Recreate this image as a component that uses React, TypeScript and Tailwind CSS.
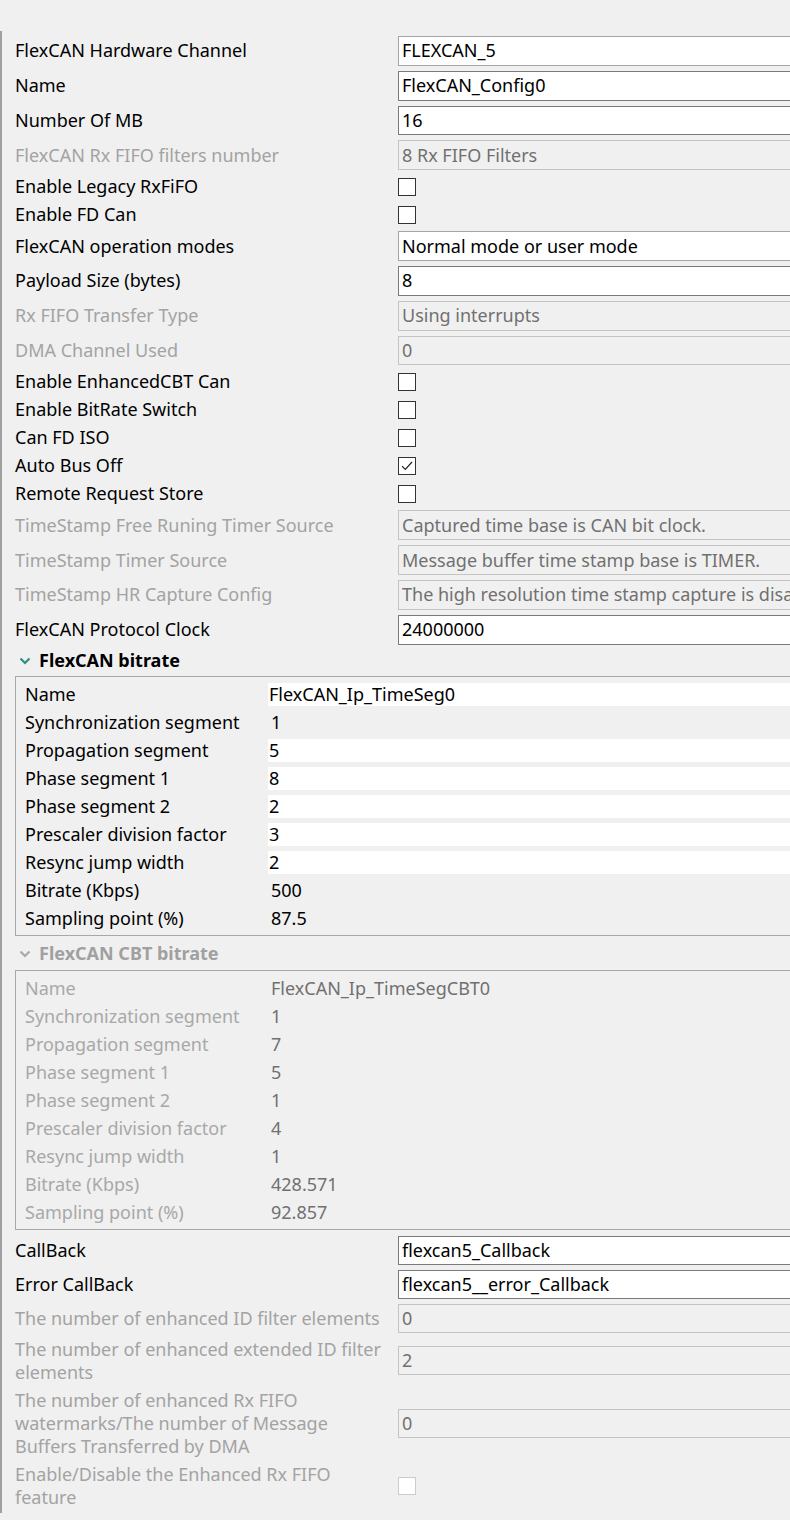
import type { ReactNode } from "react";

type Field =
  | { kind: "text"; label: string; value: string; disabled?: boolean; combo?: boolean }
  | { kind: "check"; label: string; checked?: boolean; disabled?: boolean };

type BitrateRow = { label: string; value: string; editable?: boolean };

const generalFields: Field[] = [
  { kind: "text", label: "FlexCAN Hardware Channel", value: "FLEXCAN_5", combo: true },
  { kind: "text", label: "Name", value: "FlexCAN_Config0" },
  { kind: "text", label: "Number Of MB", value: "16" },
  { kind: "text", label: "FlexCAN Rx FIFO filters number", value: "8 Rx FIFO Filters", disabled: true },
  { kind: "check", label: "Enable Legacy RxFiFO" },
  { kind: "check", label: "Enable FD Can" },
  { kind: "text", label: "FlexCAN operation modes", value: "Normal mode or user mode", combo: true },
  { kind: "text", label: "Payload Size (bytes)", value: "8" },
  { kind: "text", label: "Rx FIFO Transfer Type", value: "Using interrupts", disabled: true },
  { kind: "text", label: "DMA Channel Used", value: "0", disabled: true },
  { kind: "check", label: "Enable EnhancedCBT Can" },
  { kind: "check", label: "Enable BitRate Switch" },
  { kind: "check", label: "Can FD ISO" },
  { kind: "check", label: "Auto Bus Off", checked: true },
  { kind: "check", label: "Remote Request Store" },
  {
    kind: "text",
    label: "TimeStamp Free Runing Timer Source",
    value: "Captured time base is CAN bit clock.",
    disabled: true,
  },
  {
    kind: "text",
    label: "TimeStamp Timer Source",
    value: "Message buffer time stamp base is TIMER.",
    disabled: true,
  },
  {
    kind: "text",
    label: "TimeStamp HR Capture Config",
    value: "The high resolution time stamp capture is disabled.",
    disabled: true,
  },
  { kind: "text", label: "FlexCAN Protocol Clock", value: "24000000" },
];

const bitrate: BitrateRow[] = [
  { label: "Name", value: "FlexCAN_Ip_TimeSeg0", editable: true },
  { label: "Synchronization segment", value: "1" },
  { label: "Propagation segment", value: "5", editable: true },
  { label: "Phase segment 1", value: "8", editable: true },
  { label: "Phase segment 2", value: "2", editable: true },
  { label: "Prescaler division factor", value: "3", editable: true },
  { label: "Resync jump width", value: "2", editable: true },
  { label: "Bitrate (Kbps)", value: "500" },
  { label: "Sampling point (%)", value: "87.5" },
];

const cbtBitrate: BitrateRow[] = [
  { label: "Name", value: "FlexCAN_Ip_TimeSegCBT0" },
  { label: "Synchronization segment", value: "1" },
  { label: "Propagation segment", value: "7" },
  { label: "Phase segment 1", value: "5" },
  { label: "Phase segment 2", value: "1" },
  { label: "Prescaler division factor", value: "4" },
  { label: "Resync jump width", value: "1" },
  { label: "Bitrate (Kbps)", value: "428.571" },
  { label: "Sampling point (%)", value: "92.857" },
];

const callbackFields: Field[] = [
  { kind: "text", label: "CallBack", value: "flexcan5_Callback" },
  { kind: "text", label: "Error CallBack", value: "flexcan5__error_Callback" },
  { kind: "text", label: "The number of enhanced ID filter elements", value: "0", disabled: true },
  {
    kind: "text",
    label: "The number of enhanced extended ID filter elements",
    value: "2",
    disabled: true,
  },
  {
    kind: "text",
    label: "The number of enhanced Rx FIFO watermarks/The number of Message Buffers Transferred by DMA",
    value: "0",
    disabled: true,
  },
  { kind: "check", label: "Enable/Disable the Enhanced Rx FIFO feature", disabled: true },
];

const Checkbox = ({ checked, disabled }: { checked?: boolean; disabled?: boolean }) => (
  <div
    className={
      disabled
        ? "w-[18px] h-[18px] shrink-0 border border-[#cccccc] bg-white"
        : "w-[18px] h-[18px] shrink-0 border border-[#333333] bg-white flex items-center justify-center"
    }
  >
    {checked && (
      <svg width="14" height="14" viewBox="0 0 14 14">
        <path d="M2 7.2 L5.3 10.5 L12 3" fill="none" stroke="#222" strokeWidth="1.2" />
      </svg>
    )}
  </div>
);

const FieldRow = ({ field, compact }: { field: Field; compact?: boolean }) => {
  const labelColor = field.disabled ? "text-[#a3a3a3]" : "text-black";

  if (field.kind === "check") {
    return (
      <div className="flex items-center min-h-[23px]">
        <div className={`w-[383px] shrink-0 pr-[12px] leading-[23px] ${labelColor}`}>
          {field.label}
        </div>
        <Checkbox checked={field.checked} disabled={field.disabled} />
      </div>
    );
  }

  const box = field.disabled
    ? "border-[#c4c4c4] bg-[#f0f0f0] text-[#707070]"
    : field.combo
      ? "border-[#a5a5a5] bg-white text-black"
      : "border-[#7a7a7a] bg-white text-black";

  return (
    <div className="flex items-center">
      <div className={`w-[383px] shrink-0 pr-[10px] leading-[23px] ${labelColor}`}>
        {field.label}
      </div>
      <div
        className={`w-[430px] shrink-0 border pl-[3px] flex items-center whitespace-nowrap overflow-hidden ${
          compact ? "h-[29px]" : "h-[29.8px]"
        } ${box}`}
      >
        {field.value}
      </div>
    </div>
  );
};

const Chevron = ({ color }: { color: string }) => (
  <svg width="12" height="8" viewBox="0 0 12 8" className="shrink-0">
    <path d="M1.5 1.5 L6 6 L10.5 1.5" fill="none" stroke={color} strokeWidth="2.2" />
  </svg>
);

const BitrateGroup = ({
  title,
  rows,
  disabled,
}: {
  title: string;
  rows: BitrateRow[];
  disabled?: boolean;
}) => (
  <div className="flex flex-col">
    <div className="flex items-center h-[24px] gap-[8px] pl-[4px]">
      <Chevron color={disabled ? "#a8a8a8" : "#2f8f80"} />
      <span className={`font-bold ${disabled ? "text-[#a0a0a0]" : "text-black"}`}>{title}</span>
    </div>
    <div
      className={`${
        disabled ? "mt-[4px]" : "mt-[3px]"
      } w-[820px] border border-[#a8a8a8] pt-[6px] pb-[5px] flex flex-col gap-[5px]`}
    >
      {rows.map((row) => (
        <div key={row.label} className="flex items-center h-[23px]">
          <div
            className={`w-[252px] shrink-0 pl-[9px] leading-[23px] whitespace-nowrap ${
              disabled ? "text-[#a8a8a8]" : "text-black"
            }`}
          >
            {row.label}
          </div>
          {row.editable && !disabled ? (
            <div className="flex-1 h-[23px] bg-white pl-[1px] flex items-center text-black">
              {row.value}
            </div>
          ) : (
            <div
              className={`flex-1 pl-[3px] leading-[23px] ${
                disabled ? "text-[#707070]" : "text-black"
              }`}
            >
              {row.value}
            </div>
          )}
        </div>
      ))}
    </div>
  </div>
);

const Section = ({ children, className }: { children: ReactNode; className?: string }) => (
  <div className={`flex flex-col gap-[5px] ${className ?? ""}`}>{children}</div>
);

export default function App() {
  return (
    <div className="w-[790px] h-[1520px] overflow-hidden bg-[#f0f0f0] font-['Noto_Sans',sans-serif] text-[18px] pt-[31px]">
      <div className="border-l-2 border-[#a0a0a0] h-[1482px] pl-[13px] pt-[5px]">
        <Section>
          {generalFields.map((f) => (
            <FieldRow key={f.label} field={f} />
          ))}
        </Section>

        <div className="mt-[4px]">
          <BitrateGroup title="FlexCAN bitrate" rows={bitrate} />
        </div>
        <div className="mt-[6px]">
          <BitrateGroup title="FlexCAN CBT bitrate" rows={cbtBitrate} disabled />
        </div>

        <Section className="mt-[6px]">
          {callbackFields.map((f) => (
            <FieldRow key={f.label} field={f} compact />
          ))}
        </Section>
      </div>
    </div>
  );
}
